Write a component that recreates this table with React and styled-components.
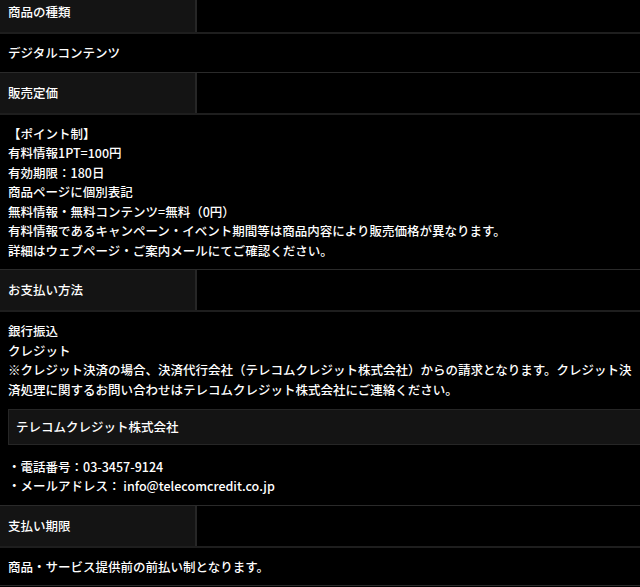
import styled, { createGlobalStyle } from "styled-components";

const GlobalStyle = createGlobalStyle`
  html, body {
    margin: 0;
    padding: 0;
    background: #000;
  }
  body {
    font-family: "Noto Sans CJK JP", "Noto Sans", sans-serif;
    font-size: 12.5px;
    color: #fff;
    overflow: hidden;
  }
`;

const Table = styled.div`
  margin-top: -8px;
  width: 640px;
`;

const HeadRow = styled.div`
  display: flex;
  border-bottom: 2px solid #1e1e1e;
`;

const HeadCell = styled.div`
  width: 179px;
  padding: 10px 8px;
  line-height: 20px;
  background: #141414;
  border-right: 2px solid #262626;
  font-weight: 500;
`;

const BodyRow = styled.div`
  padding: 9px 0 9px 8px;
  line-height: 19.5px;
  border-bottom: 1px solid #2a2a2a;
  font-weight: 500;
`;

const Line = styled.p`
  margin: 0;
`;

const CompanyBox = styled.div`
  margin: 10px 0 12px;
  padding: 7px 7px;
  background: #141414;
  border: 1px solid #262626;
  border-right: none;
  line-height: 19.5px;
`;

const sections = [
  {
    title: "商品の種類",
    lines: ["デジタルコンテンツ"],
  },
  {
    title: "販売定価",
    lines: [
      "【ポイント制】",
      "有料情報1PT=100円",
      "有効期限：180日",
      "商品ページに個別表記",
      "無料情報・無料コンテンツ=無料（0円）",
      "有料情報であるキャンペーン・イベント期間等は商品内容により販売価格が異なります。",
      "詳細はウェブページ・ご案内メールにてご確認ください。",
    ],
  },
  {
    title: "お支払い方法",
    lines: [
      "銀行振込",
      "クレジット",
      "※クレジット決済の場合、決済代行会社（テレコムクレジット株式会社）からの請求となります。クレジット決済処理に関するお問い合わせはテレコムクレジット株式会社にご連絡ください。",
    ],
    company: "テレコムクレジット株式会社",
    contact: ["・電話番号：03-3457-9124", "・メールアドレス： info@telecomcredit.co.jp"],
  },
  {
    title: "支払い期限",
    lines: ["商品・サービス提供前の前払い制となります。"],
  },
];

const App = () => {
  return (
    <>
      <GlobalStyle />
      <Table>
        {sections.map((sec) => (
          <section key={sec.title}>
            <HeadRow>
              <HeadCell>{sec.title}</HeadCell>
            </HeadRow>
            <BodyRow>
              {sec.lines.map((l) => (
                <Line key={l}>{l}</Line>
              ))}
              {sec.company && <CompanyBox>{sec.company}</CompanyBox>}
              {sec.contact &&
                sec.contact.map((c) => <Line key={c}>{c}</Line>)}
            </BodyRow>
          </section>
        ))}
      </Table>
    </>
  );
};

export default App;
